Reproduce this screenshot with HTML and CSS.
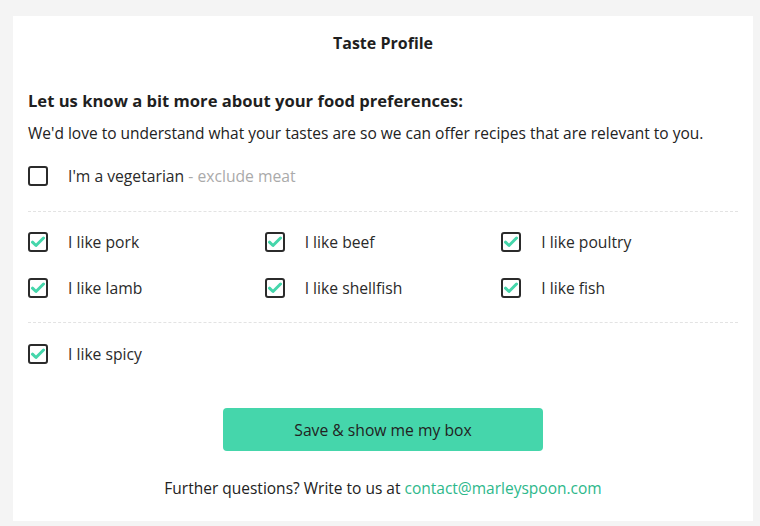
FILE: index.html
```html
<!DOCTYPE html>
<html lang="en">
<head>
<meta charset="utf-8">
<title>Taste Profile</title>
<link rel="stylesheet" href="styles.css">
</head>
<body>
<div class="card">
  <h1 class="title">Taste Profile</h1>
  <h2 class="heading">Let us know a bit more about your food preferences:</h2>
  <p class="intro">We'd love to understand what your tastes are so we can offer recipes that are relevant to you.</p>

  <label class="option">
    <span class="box"></span>
    <span class="text">I'm a vegetarian <span class="muted">- exclude meat</span></span>
  </label>

  <div class="divider divider-top"></div>

  <div class="grid">
    <label class="option"><span class="box checked"><svg viewBox="0 0 14 12" width="14" height="12"><path d="M1.5 6.2 L5 9.5 L12.5 2" fill="none" stroke="#45d6ab" stroke-width="3" stroke-linecap="round" stroke-linejoin="round"/></svg></span><span class="text">I like pork</span></label>
    <label class="option"><span class="box checked"><svg viewBox="0 0 14 12" width="14" height="12"><path d="M1.5 6.2 L5 9.5 L12.5 2" fill="none" stroke="#45d6ab" stroke-width="3" stroke-linecap="round" stroke-linejoin="round"/></svg></span><span class="text">I like beef</span></label>
    <label class="option"><span class="box checked"><svg viewBox="0 0 14 12" width="14" height="12"><path d="M1.5 6.2 L5 9.5 L12.5 2" fill="none" stroke="#45d6ab" stroke-width="3" stroke-linecap="round" stroke-linejoin="round"/></svg></span><span class="text">I like poultry</span></label>
    <label class="option"><span class="box checked"><svg viewBox="0 0 14 12" width="14" height="12"><path d="M1.5 6.2 L5 9.5 L12.5 2" fill="none" stroke="#45d6ab" stroke-width="3" stroke-linecap="round" stroke-linejoin="round"/></svg></span><span class="text">I like lamb</span></label>
    <label class="option"><span class="box checked"><svg viewBox="0 0 14 12" width="14" height="12"><path d="M1.5 6.2 L5 9.5 L12.5 2" fill="none" stroke="#45d6ab" stroke-width="3" stroke-linecap="round" stroke-linejoin="round"/></svg></span><span class="text">I like shellfish</span></label>
    <label class="option"><span class="box checked"><svg viewBox="0 0 14 12" width="14" height="12"><path d="M1.5 6.2 L5 9.5 L12.5 2" fill="none" stroke="#45d6ab" stroke-width="3" stroke-linecap="round" stroke-linejoin="round"/></svg></span><span class="text">I like fish</span></label>
  </div>

  <div class="divider divider-bottom"></div>

  <label class="option spicy"><span class="box checked"><svg viewBox="0 0 14 12" width="14" height="12"><path d="M1.5 6.2 L5 9.5 L12.5 2" fill="none" stroke="#45d6ab" stroke-width="3" stroke-linecap="round" stroke-linejoin="round"/></svg></span><span class="text">I like spicy</span></label>

  <div class="actions">
    <button class="save" type="button">Save &amp; show me my box</button>
  </div>

  <p class="footer">Further questions? Write to us at <a href="#" class="mail">contact@marleyspoon.com</a></p>
</div>
</body>
</html>
```

FILE: styles.css
```css
html, body {
  margin: 0;
  padding: 0;
  background: #f4f4f4;
}

body {
  padding: 16px 7px 5px 13px;
  font-family: "Open Sans", "Noto Sans", "Liberation Sans", sans-serif;
  color: #222;
}

.card {
  background: #fff;
  padding: 15px 15px 21px;
  min-height: 505px;
  box-sizing: border-box;
}

.title {
  margin: 0;
  font-size: 16px;
  line-height: 24px;
  font-weight: 700;
  text-align: center;
  color: #1f1f1f;
}

.heading {
  margin: 34px 0 0;
  font-size: 16.6px;
  line-height: 24px;
  font-weight: 700;
  color: #1f1f1f;
}

.intro {
  margin: 8px 0 0;
  font-size: 15.5px;
  line-height: 24px;
  color: #222;
}

.option {
  display: flex;
  align-items: center;
  gap: 20px;
  height: 20px;
  font-size: 15.7px;
  color: #2a2a2a;
  cursor: pointer;
}

.card > .option:first-of-type {
  margin-top: 21px;
}

.box {
  flex: none;
  width: 20px;
  height: 20px;
  box-sizing: border-box;
  border: 2px solid #2b2b2b;
  border-radius: 3px;
  display: flex;
  align-items: center;
  justify-content: center;
}

.box svg {
  display: block;
}

.muted {
  color: #aaa;
}

.divider {
  border-top: 1px dashed #e3e3e3;
}

.divider-top {
  margin-top: 25px;
}

.divider-bottom {
  margin-top: 24px;
}

.grid {
  display: grid;
  grid-template-columns: repeat(3, 1fr);
  row-gap: 26px;
  margin-top: 20px;
}

.spicy {
  margin-top: 21px;
}

.actions {
  display: flex;
  justify-content: center;
  margin-top: 44px;
}

.save {
  width: 320px;
  height: 43px;
  border: none;
  border-radius: 4px;
  background: #45d6ab;
  color: #222;
  font-family: inherit;
  font-size: 15.7px;
  cursor: pointer;
}

.footer {
  margin: 25px 0 0;
  font-size: 15.5px;
  line-height: 24px;
  text-align: center;
  color: #222;
}

.mail {
  color: #2db88b;
  text-decoration: none;
}
```
